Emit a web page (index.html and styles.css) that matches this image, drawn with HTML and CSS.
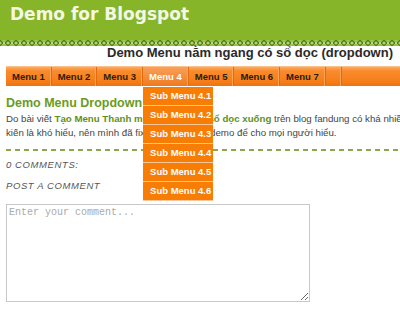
FILE: index.html
```html
<!DOCTYPE html>
<html lang="vi">
<head>
    <meta charset="UTF-8">
    <title>Demo for Blogspot</title>
    <link rel="stylesheet" href="styles.css">
</head>
<body>
    <div class="page">
        <div class="header">
            <h1>Demo for Blogspot</h1>
        </div>
        <svg class="band" width="440" height="6">
            <defs>
                <pattern id="chain" width="8" height="6" patternUnits="userSpaceOnUse">
                    <rect width="8" height="6" fill="#9cc24a"/>
                    <path d="M0 0 Q4 6 8 0 M0 6 Q4 0 8 6" stroke="#4d7a14" stroke-width="1.2" fill="none"/>
                    <circle cx="4" cy="3" r="0.9" fill="#e9f2cf"/>
                    <circle cx="0" cy="3" r="0.7" fill="#dcebb5"/>
                    <circle cx="8" cy="3" r="0.7" fill="#dcebb5"/>
                </pattern>
            </defs>
            <rect width="440" height="6" fill="url(#chain)"/>
        </svg>

        <h2 class="subtitle">Demo Menu nằm ngang có sổ dọc (dropdown)</h2>

        <div class="menubar">
            <a class="item" href="#">Menu 1</a>
            <a class="item" href="#">Menu 2</a>
            <a class="item" href="#">Menu 3</a>
            <div class="item active">
                Menu 4
                <ul class="submenu">
                    <li>Sub Menu 4.1</li>
                    <li>Sub Menu 4.2</li>
                    <li>Sub Menu 4.3</li>
                    <li>Sub Menu 4.4</li>
                    <li>Sub Menu 4.5</li>
                    <li>Sub Menu 4.6</li>
                </ul>
            </div>
            <a class="item" href="#">Menu 5</a>
            <a class="item" href="#">Menu 6</a>
            <a class="item" href="#">Menu 7</a>
            <span class="item blank"></span>
        </div>

        <div class="post">
            <h3 class="post-title">Demo Menu Dropdown</h3>
            <p class="post-body">Do bài viết <a href="#">Tạo Menu Thanh menu ngang có sổ dọc xuống</a> trên blog fandung có khá nhiều ý<br>kiến là khó hiểu, nên mình đã fix lại và làm một demo để cho mọi người hiểu.</p>
        </div>

        <div class="divider"></div>

        <h4 class="comments first">0 Comments:</h4>
        <h4 class="comments">Post a Comment</h4>

        <textarea class="comment-box" placeholder="Enter your comment..."></textarea>
    </div>
</body>
</html>
```

FILE: styles.css
```css
body {
    margin: 0;
    background: #fff;
    font-family: "Liberation Sans", Arial, sans-serif;
    overflow: hidden;
}
.page {
    width: 440px;
}
.header {
    height: 40px;
    background: #86b52a;
    padding: 2px 10px 0;
    box-sizing: border-box;
}
.header h1 {
    margin: 0;
    font-family: "DejaVu Sans", Verdana, sans-serif;
    font-size: 17px;
    line-height: 25px;
    color: #f4f8e2;
}
.band {
    display: block;
}
.subtitle {
    margin: 0 0 6px;
    width: 393px;
    text-align: right;
    font-size: 13px;
    line-height: 14px;
    color: #2a2a2a;
}
.menubar {
    display: flex;
    margin-left: 6px;
    height: 20px;
    background: linear-gradient(#fbab62 0, #f98b2c 20%, #f67f1c 70%, #ee7410 100%);
    border-top: 1px solid #fcc08a;
    box-sizing: border-box;
}
.item {
    position: relative;
    width: 45.7px;
    flex: none;
    text-align: center;
    font-size: 9.5px;
    font-weight: bold;
    line-height: 19px;
    color: #2e1c06;
    text-decoration: none;
    border-right: 1px solid #e06c10;
    box-shadow: inset -1px 0 0 #fba55a;
    box-sizing: border-box;
}
.item.blank {
    width: 16px;
}
.item.active {
    color: #fff;
    background: linear-gradient(#f9a05a, #f07a1e);
}
.submenu {
    position: absolute;
    top: 20px;
    left: 0;
    width: 70px;
    margin: 0;
    padding: 0;
    list-style: none;
    z-index: 2;
}
.submenu li {
    height: 19px;
    line-height: 18px;
    padding-left: 7px;
    text-align: left;
    white-space: nowrap;
    background: #f77d05;
    border-bottom: 1px solid #fbc79a;
    box-sizing: border-box;
    color: #fff;
    font-size: 9.5px;
    font-weight: bold;
}
.post {
    padding: 9px 6px 0;
}
.post-title {
    margin: 0 0 1px;
    font-size: 12.5px;
    line-height: 16px;
    color: #6b9b1e;
}
.post-body {
    margin: 0;
    font-size: 9.7px;
    line-height: 14px;
    color: #444;
    white-space: nowrap;
}
.post-body a {
    color: #5f9119;
    font-weight: bold;
    text-decoration: none;
}
.divider {
    margin: 9px 0 0 6px;
    height: 2px;
    background: repeating-linear-gradient(to right, #8ba84a 0 5px, transparent 5px 9px);
}
.comments {
    margin: 0 0 0 6px;
    font-size: 9.5px;
    font-weight: normal;
    font-style: italic;
    letter-spacing: 0.6px;
    text-transform: uppercase;
    color: #555;
    line-height: 21px;
}
.comments.first {
    margin-top: 3px;
}
.comment-box {
    display: block;
    margin: 8px 0 0 6px;
    width: 304px;
    height: 98px;
    padding: 2px 2px;
    border: 1px solid #c8c8c8;
    box-sizing: border-box;
    resize: both;
    font-family: "Liberation Mono", "Courier New", monospace;
    font-size: 10px;
}
.comment-box::placeholder {
    color: #aaa;
}
```
